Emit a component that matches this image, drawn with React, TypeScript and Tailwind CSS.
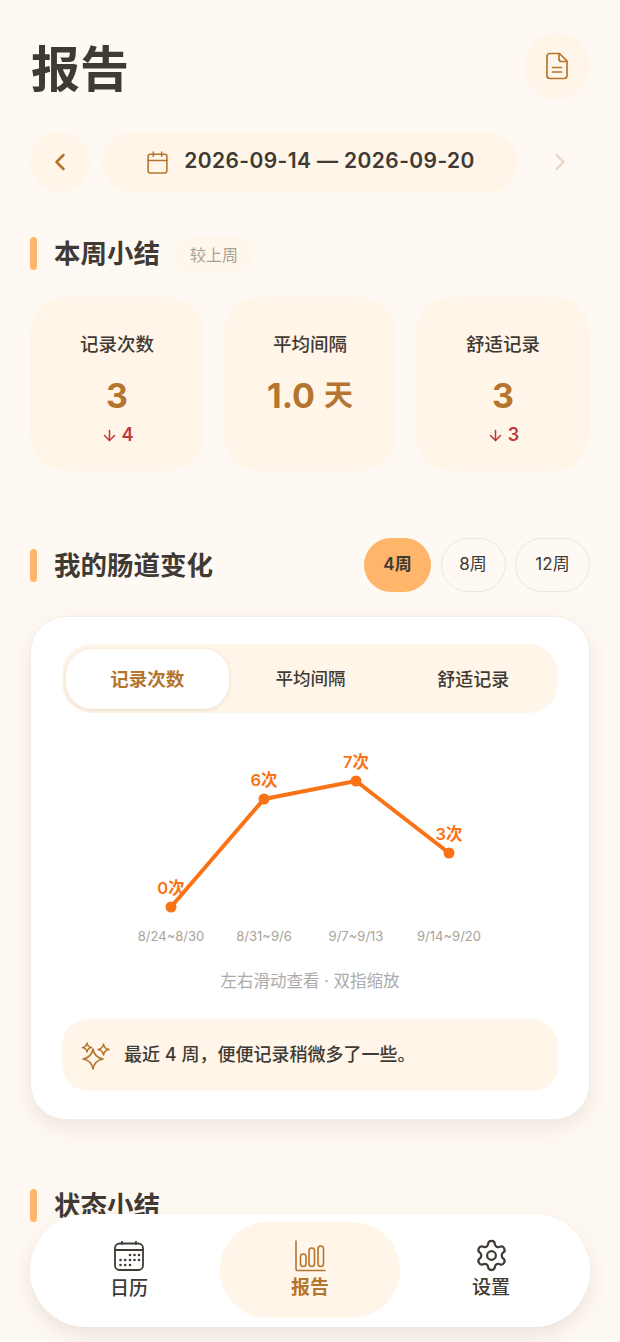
import React from 'react';
import { ArrowDown, Calendar, ChevronLeft, ChevronRight, Settings } from 'lucide-react';

const summary = [
  { label: '记录次数', value: '3', unit: '', delta: '4' },
  { label: '平均间隔', value: '1.0', unit: '天', delta: '' },
  { label: '舒适记录', value: '3', unit: '', delta: '3' },
];

const points = [
  { x: 109, y: 182, label: '0次', axis: '8/24~8/30' },
  { x: 202, y: 74, label: '6次', axis: '8/31~9/6' },
  { x: 294, y: 56, label: '7次', axis: '9/7~9/13' },
  { x: 387, y: 128, label: '3次', axis: '9/14~9/20' },
];

function SectionTitle({ title }: { title: string }) {
  return (
    <div className="flex h-[33px] items-center gap-[17px]">
      <span className="h-[33px] w-[7px] rounded-full bg-[#FFB66B]" />
      <h2 className="text-[26.5px] leading-[33px] font-bold text-[#3F3A33]">{title}</h2>
    </div>
  );
}

function DocIcon() {
  return (
    <svg width="24" height="28" viewBox="0 0 24 28" fill="none" stroke="#B5752F" strokeWidth="1.7" strokeLinecap="round" strokeLinejoin="round">
      <path d="M14.500 1.500 H5 C3 1.500 2 2.500 2 4.500 V23.500 C2 25.500 3 26.500 5 26.500 H19 C21 26.500 22 25.500 22 23.500 V9 Z" />
      <path d="M14 2 V7 C14 8.500 15 9.500 16.500 9.500 H21.500" />
      <path d="M7.500 15.500 H16.500 M7.500 20 H16.500" />
    </svg>
  );
}

function Sparkle() {
  return (
    <svg width="30" height="30" viewBox="0 0 30 30" fill="none" stroke="#B5752F" strokeWidth="1.6" strokeLinejoin="round">
      <path d="M12 9 Q13.500 17.500 22 19 Q13.500 20.500 12 29 Q10.500 20.500 2 19 Q10.500 17.500 12 9Z" />
      <path d="M6 3 Q6.600 6.900 10.500 7.500 Q6.600 8.100 6 12 Q5.400 8.100 1.500 7.500 Q5.400 6.900 6 3Z" />
      <path d="M22.500 4 Q23.200 8.800 28 9.500 Q23.200 10.200 22.500 15 Q21.800 10.200 17 9.500 Q21.800 8.800 22.500 4Z" />
    </svg>
  );
}

function CalendarNav() {
  return (
    <svg width="30" height="30" viewBox="0 0 30 30" fill="none" stroke="#3F3A33" strokeWidth="1.8" strokeLinecap="round">
      <rect x="1" y="2.5" width="28" height="26.5" rx="4.5" />
      <path d="M1 9 H29 M8 0.8 V3 M22 0.8 V3" />
      <g fill="#3F3A33" stroke="none">
        <circle cx="16" cy="14" r="1.3" /><circle cx="20.5" cy="14" r="1.3" /><circle cx="25" cy="14" r="1.3" />
        <circle cx="6.500" cy="19" r="1.3" /><circle cx="11.200" cy="19" r="1.3" /><circle cx="16" cy="19" r="1.3" /><circle cx="20.5" cy="19" r="1.3" /><circle cx="25" cy="19" r="1.3" />
        <circle cx="6.500" cy="24" r="1.3" /><circle cx="11.200" cy="24" r="1.3" /><circle cx="16" cy="24" r="1.3" />
      </g>
    </svg>
  );
}

function BarsNav() {
  return (
    <svg width="31" height="32" viewBox="0 0 31 32" fill="none" stroke="#B5752F" strokeWidth="1.6" strokeLinecap="round">
      <path d="M1 1 V29 C1 30 1.500 30.500 2.500 30.500 H30" />
      <rect x="5.500" y="14" width="5.500" height="12.500" rx="2.750" />
      <rect x="14" y="8" width="5.500" height="18.500" rx="2.750" />
      <rect x="23" y="6" width="5.500" height="20.500" rx="2.750" />
    </svg>
  );
}

export default function App() {
  return (
    <div
      className="relative h-[1342px] overflow-hidden bg-[#FFF9F3] text-[#3F3A33]"
      style={{ fontFamily: 'Inter, "Noto Sans CJK SC", sans-serif' }}
    >
      <main className="px-[30px] pt-[33px]">
        {/* Header */}
        <div className="flex h-[66px] items-center justify-between">
          <h1 className="pt-[8px] pl-[1px] text-[49px] leading-[66px] font-bold text-[#3F3A33]">报告</h1>
          <button className="flex h-[66px] w-[66px] items-center justify-center rounded-full bg-[#FFF5E9]">
            <DocIcon />
          </button>
        </div>

        {/* Date range */}
        <div className="mt-[33px] flex h-[60px] items-center gap-[12px]">
          <button className="flex h-[60px] w-[60px] shrink-0 items-center justify-center rounded-full bg-[#FFF5E9]">
            <ChevronLeft size={28} strokeWidth={2.2} className="text-[#B5752F]" />
          </button>
          <div className="flex h-[60px] flex-1 items-center justify-center gap-[14px] rounded-full bg-[#FFF5E9]">
            <Calendar size={25} strokeWidth={1.5} className="text-[#B5752F]" />
            <span className="pb-[2px] text-[21px] font-semibold tracking-[0.4px] text-[#3F3A33]">2026-09-14 — 2026-09-20</span>
          </div>
          <button className="flex h-[60px] w-[60px] shrink-0 items-center justify-center rounded-full bg-[#FFF9F3]">
            <ChevronRight size={28} strokeWidth={2} className="text-[#E9D8C3]" />
          </button>
        </div>

        {/* Weekly summary */}
        <div className="mt-[45px] flex h-[36px] items-start gap-[14px]">
          <SectionTitle title="本周小结" />
          <span className="flex h-[36px] w-[80px] items-center justify-center rounded-full bg-[#FFF6EC] text-[16px] text-[#A8A196]">较上周</span>
        </div>

        <div className="mt-[24px] grid grid-cols-[174px_172px_174px] gap-[20px]">
          {summary.map((item) => (
            <div key={item.label} className="flex h-[174px] flex-col items-center rounded-[36px] bg-[#FFF5E9] pt-[32px]">
              <span className="text-[18.500px] leading-[30px] font-medium text-[#3F3A33]">{item.label}</span>
              <span className="mt-[15px] flex items-center gap-[9px] text-[34px] leading-[44px] font-bold text-[#B5752F]">
                {item.value}
                {item.unit && <span className="text-[29px]">{item.unit}</span>}
              </span>
              {item.delta && (
                <span className="mt-[5px] flex items-center gap-[4px] text-[18px] leading-[24px] font-semibold text-[#C0393B]">
                  <ArrowDown size={17} strokeWidth={2.2} />
                  {item.delta}
                </span>
              )}
            </div>
          ))}
        </div>

        {/* Trend */}
        <div className="mt-[67px] flex h-[54px] items-center justify-between">
          <SectionTitle title="我的肠道变化" />
          <div className="flex items-center gap-[9.500px]">
            <button className="flex h-[54px] w-[67px] items-center justify-center rounded-[27px] bg-[#FFB66B] text-[17px] font-semibold text-[#3F3A33]">4周</button>
            <button className="flex h-[54px] w-[65px] items-center justify-center rounded-[27px] border border-[#ECE7E0] text-[17px] text-[#3F3A33]">8周</button>
            <button className="flex h-[54px] w-[75px] items-center justify-center rounded-[27px] border border-[#ECE7E0] text-[17px] text-[#3F3A33]">12周</button>
          </div>
        </div>

        <section className="mt-[24px] h-[504px] rounded-[36px] border border-[#F1EEEA] bg-white px-[31px] pt-[27px] shadow-[0_8px_20px_rgba(90,70,40,0.1)]">
          <div className="grid h-[69px] grid-cols-3 rounded-[30px] bg-[#FFF5E9] px-[4px] pt-[5px] pb-[4px]">
            <div className="flex items-center justify-center rounded-[26px] bg-white pt-[1px] text-[18.500px] font-semibold text-[#B5752F] shadow-[0_1px_4px_rgba(150,110,60,0.2)]">记录次数</div>
            <div className="flex items-center justify-center pt-[1px] pl-[1px] text-[17.500px] font-medium text-[#3F3A33]">平均间隔</div>
            <div className="flex items-center justify-center pt-[1px] pl-[1px] text-[18px] font-medium text-[#3F3A33]">舒适记录</div>
          </div>

          <svg className="mt-[12px] block" width="496" height="226" viewBox="0 0 496 226">
            <polyline
              points={points.map((p) => `${p.x},${p.y}`).join(' ')}
              fill="none"
              stroke="#F97316"
              strokeWidth="4"
              strokeLinejoin="round"
            />
            {points.map((p) => (
              <g key={p.axis}>
                <circle cx={p.x} cy={p.y} r="5.5" fill="#F97316" />
                <text x={p.x} y={p.y - 13} textAnchor="middle" fontSize="16.500" fontWeight="600" fill="#F97316">{p.label}</text>
                <text x={p.x} y="215.500" textAnchor="middle" fontSize="13" fill="#A8A29A">{p.axis}</text>
              </g>
            ))}
          </svg>

          <p className="mt-[15px] text-center text-[16.500px] leading-[30px] text-[#ABABAB]">左右滑动查看 · 双指缩放</p>

          <div className="mt-[23px] flex h-[72px] items-center gap-[13px] rounded-[26px] bg-[#FFF5E9] pl-[19px]">
            <Sparkle />
            <span className="pb-[1px] text-[18px] font-medium text-[#3F3A33]">最近 4 周，便便记录稍微多了一些。</span>
          </div>
        </section>

        {/* Status summary, runs under the tab bar */}
        <div className="mt-[69px]">
          <SectionTitle title="状态小结" />
        </div>
      </main>

      {/* Tab bar */}
      <nav className="absolute top-[1214px] left-[30px] grid h-[113px] w-[560px] grid-cols-[190px_180px_190px] rounded-full bg-white shadow-[0_8px_20px_rgba(90,70,40,0.12)]">
        <div className="flex flex-col items-center pt-[27px] pl-[8px]">
          <CalendarNav />
          <span className="mt-[4px] text-[19px] leading-[28px] font-medium text-[#3F3A33]">日历</span>
        </div>
        <div className="mt-[8px] flex h-[96px] flex-col items-center rounded-full bg-[#FFF5E9] pt-[18px]">
          <BarsNav />
          <span className="mt-[2px] text-[19px] leading-[28px] font-semibold text-[#B5752F]">报告</span>
        </div>
        <div className="flex flex-col items-center pt-[24px] pr-[8px]">
          <Settings size={35} strokeWidth={1.5} className="text-[#3F3A33]" />
          <span className="mt-[1px] text-[19px] leading-[28px] font-medium text-[#3F3A33]">设置</span>
        </div>
      </nav>
    </div>
  );
}
